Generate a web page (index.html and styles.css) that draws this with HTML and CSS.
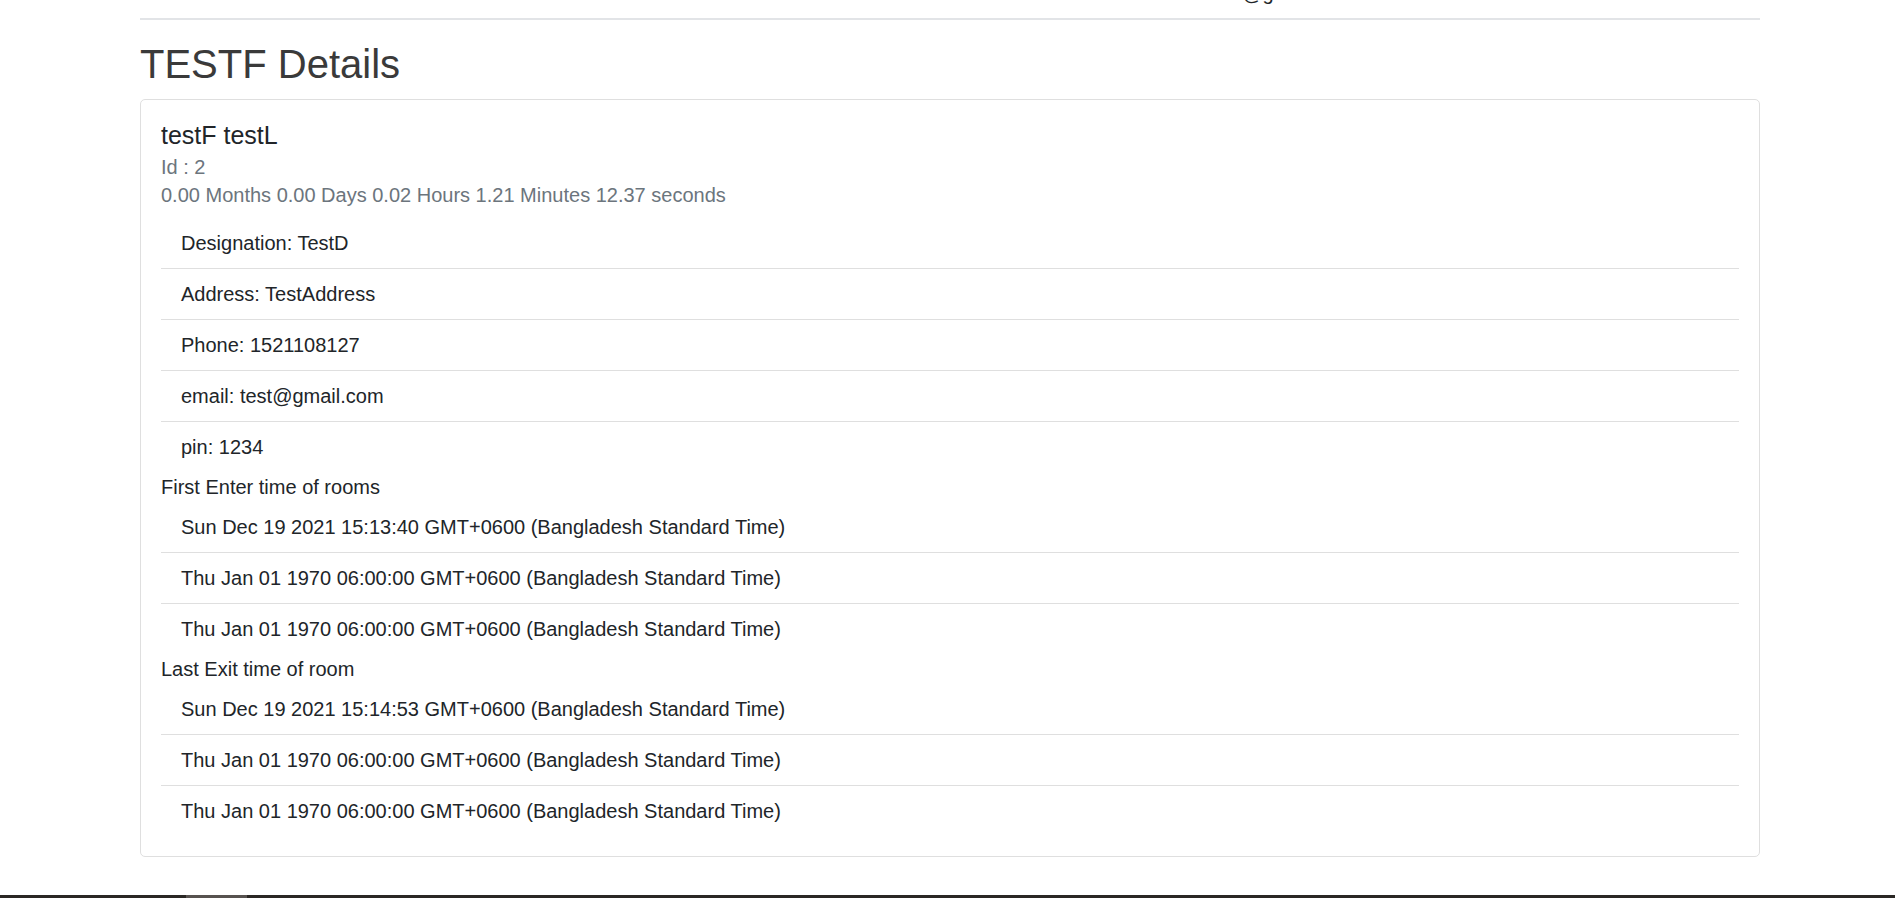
FILE: index.html
```html
<!DOCTYPE html>
<html lang="en">
<head>
<meta charset="utf-8">
<title>TESTF Details</title>
<link rel="stylesheet" href="styles.css">
</head>
<body>
<header class="topnav">
  <span class="nav-user">test@gmail.com</span>
</header>
<main class="container">
  <hr class="rule">
  <h1 class="page-title">TESTF Details</h1>
  <section class="card">
    <div class="card-body">
      <h5 class="card-title">testF testL</h5>
      <div class="card-subtitle id-line">Id : 2</div>
      <div class="card-subtitle duration">0.00 Months 0.00 Days 0.02 Hours 1.21 Minutes 12.37 seconds</div>
      <ul class="list-group">
        <li class="list-item">Designation: TestD</li>
        <li class="list-item">Address: TestAddress</li>
        <li class="list-item">Phone: 1521108127</li>
        <li class="list-item">email: test@gmail.com</li>
        <li class="list-item">pin: 1234</li>
      </ul>
      <div class="group-label">First Enter time of rooms</div>
      <ul class="list-group">
        <li class="list-item">Sun Dec 19 2021 15:13:40 GMT+0600 (Bangladesh Standard Time)</li>
        <li class="list-item">Thu Jan 01 1970 06:00:00 GMT+0600 (Bangladesh Standard Time)</li>
        <li class="list-item">Thu Jan 01 1970 06:00:00 GMT+0600 (Bangladesh Standard Time)</li>
      </ul>
      <div class="group-label">Last Exit time of room</div>
      <ul class="list-group">
        <li class="list-item">Sun Dec 19 2021 15:14:53 GMT+0600 (Bangladesh Standard Time)</li>
        <li class="list-item">Thu Jan 01 1970 06:00:00 GMT+0600 (Bangladesh Standard Time)</li>
        <li class="list-item">Thu Jan 01 1970 06:00:00 GMT+0600 (Bangladesh Standard Time)</li>
      </ul>
    </div>
  </section>
</main>
<footer class="footer">
  <span class="footer-tab"></span>
</footer>
</body>
</html>
```
FILE: styles.css
```css
* {
  box-sizing: border-box;
}

html, body {
  margin: 0;
  padding: 0;
  background: #ffffff;
}

body {
  font-family: "Liberation Sans", Arial, sans-serif;
  font-size: 20px;
  line-height: 30px;
  color: #212529;
  overflow: hidden;
}

.topnav {
  display: flex;
  height: 30px;
  margin-top: -22px;
  padding-left: 1210px;
}

.nav-user {
  color: #212529;
  font-size: 20px;
  line-height: 30px;
}

.container {
  width: 1620px;
  margin-left: 140px;
}

.rule {
  margin: 10px 0 0 0;
  border: 0;
  height: 2px;
  background: #e2e4e7;
}

.page-title {
  margin: 20px 0 11px 0;
  font-size: 40px;
  line-height: 48px;
  font-weight: 400;
  color: #3a3a3a;
}

.card {
  border: 1px solid #dfdfdf;
  border-radius: 5px;
  background: #fff;
}

.card-body {
  padding: 20px;
}

.card-title {
  margin: 0;
  font-size: 25px;
  line-height: 30px;
  font-weight: 400;
  color: #212529;
}

.card-subtitle {
  color: #6c757d;
  font-size: 20px;
  line-height: 30px;
}

.id-line {
  margin-top: 2px;
  margin-bottom: -2px;
}

.duration {
  margin-bottom: 8px;
}

.list-group {
  list-style: none;
  margin: 0;
  padding: 0;
}

.list-item {
  padding: 10px 20px;
  border-bottom: 1px solid #dfdfdf;
}

.list-item:last-child {
  border-bottom: 0;
}

.group-label {
  color: #212529;
}

.footer {
  margin-top: 38px;
  height: 40px;
  background: #2a2724;
  padding-left: 186px;
}

.footer-tab {
  display: block;
  width: 61px;
  height: 40px;
  background: #57524f;
}
```
